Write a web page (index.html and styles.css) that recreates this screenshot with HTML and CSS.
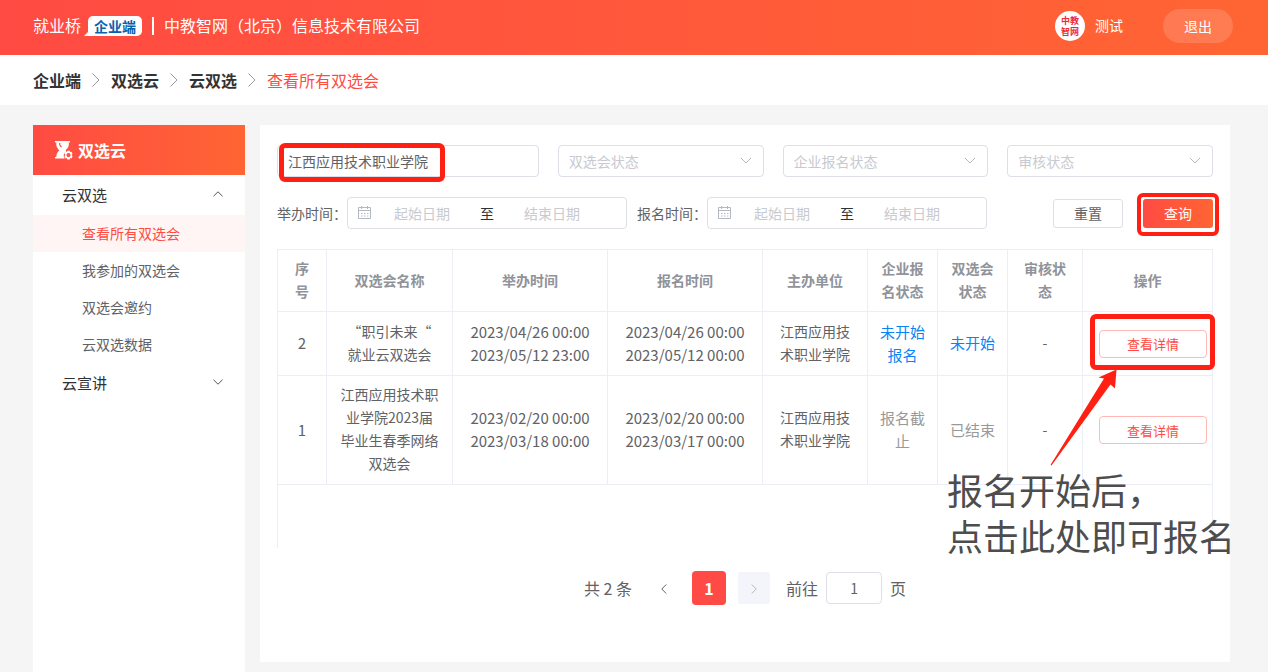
FILE: index.html
```html
<!DOCTYPE html>
<html lang="zh-CN">
<head>
    <meta charset="UTF-8">
    <meta name="viewport" content="width=device-width, initial-scale=1.0">
    <title>查看所有双选会 - 就业桥企业端</title>
    <link rel="stylesheet" href="styles.css">
</head>
<body>
    <header class="header">
        <span class="logo-text">就业桥</span>
        <span class="logo-badge">企业端</span>
        <span class="header-line"></span>
        <span class="company">中教智网（北京）信息技术有限公司</span>
        <div class="user">
            <span class="avatar">中教<br>智网</span>
            <span class="user-name">测试</span>
            <button type="button" class="logout-btn">退出</button>
        </div>
    </header>

    <nav class="breadcrumb">
        <a href="#">企业端</a>
        <svg width="8" height="16" viewBox="0 0 8 16"><path d="M0.5 1.5L7 8L0.5 14.5"/></svg>
        <a href="#">双选云</a>
        <svg width="8" height="16" viewBox="0 0 8 16"><path d="M0.5 1.5L7 8L0.5 14.5"/></svg>
        <a href="#">云双选</a>
        <svg width="8" height="16" viewBox="0 0 8 16"><path d="M0.5 1.5L7 8L0.5 14.5"/></svg>
        <span class="current">查看所有双选会</span>
    </nav>

    <div class="page">
        <aside class="sidebar">
            <div class="sidebar-title">
                <svg width="18" height="19" viewBox="0 0 18 19">
                    <path fill="#fff" fill-rule="evenodd" d="M0 0h15v1.500h-1.200v2.200c0 2.200-1.200 3.600-3 5.100 0 .8.2 1.200.6 1.600-1.700.8-2.700 2.300-2.700 4 0 1.200.4 2.300 1.100 3.100H0v-1.500h1.300c0-3 1.200-4.800 2.900-6.700C2.600 7.200 1.300 5.800 1.300 3.700V1.500H0zM4 2c0 2.200.8 3.400 2.400 4.600l.7-.8C5.600 4.700 5.200 3.600 5.200 2z"/>
                    <path fill="#fff" fill-rule="evenodd" d="M12.300 9.800h2.400l.4 1.300 1.300-.3 1.200 2-1 1.300 1 1.300-1.200 2-1.300-.3-.4 1.400h-2.400l-.4-1.400-1.300.3-1.200-2 1-1.300-1-1.300 1.200-2 1.300.3zM13.500 12a2.100 2.100 0 1 0 0 4.200 2.100 2.100 0 0 0 0-4.200z"/>
                </svg>
                <span>双选云</span>
            </div>
            <button type="button" class="menu-group">云双选
                <svg width="10" height="6" viewBox="0 0 10 6"><path d="M0.500 5.200L5 0.800L9.500 5.200"/></svg>
            </button>
            <a href="#" class="menu-item active">查看所有双选会</a>
            <a href="#" class="menu-item">我参加的双选会</a>
            <a href="#" class="menu-item">双选会邀约</a>
            <a href="#" class="menu-item">云双选数据</a>
            <button type="button" class="menu-group">云宣讲
                <svg width="10" height="6" viewBox="0 0 10 6"><path d="M0.500 0.800L5 5.200L9.500 0.800"/></svg>
            </button>
        </aside>

        <main class="main">
            <div class="filters">
                <div class="field">
                    <input type="text" class="text-input" value="江西应用技术职业学院" aria-label="学校名称">
                    <span class="mark mark-search"></span>
                </div>
                <div class="field">
                    <select class="select" aria-label="双选会状态"><option>双选会状态</option></select>
                    <svg class="arrow" width="12" height="7" viewBox="0 0 12 7"><path d="M1 1L6 6L11 1"/></svg>
                </div>
                <div class="field">
                    <select class="select" aria-label="企业报名状态"><option>企业报名状态</option></select>
                    <svg class="arrow" width="12" height="7" viewBox="0 0 12 7"><path d="M1 1L6 6L11 1"/></svg>
                </div>
                <div class="field">
                    <select class="select" aria-label="审核状态"><option>审核状态</option></select>
                    <svg class="arrow" width="12" height="7" viewBox="0 0 12 7"><path d="M1 1L6 6L11 1"/></svg>
                </div>
            </div>

            <div class="filters-dates">
                <div class="date-group">
                    <label for="hold-start">举办时间：</label>
                    <div class="date-range">
                        <svg width="14" height="14" viewBox="0 0 14 14"><path d="M0.500 1.500h12v11h-12zM0.500 4.500h12M3.500 0v3M9.500 0v3M3 7.500h1.500M6 7.500h1.500M9 7.500h1.500M3 10h1.500M6 10h1.500M9 10h1.500"/></svg>
                        <input type="text" id="hold-start" placeholder="起始日期">
                        <span>至</span>
                        <input type="text" placeholder="结束日期" aria-label="举办结束日期">
                    </div>
                </div>
                <div class="date-group">
                    <label for="sign-start">报名时间：</label>
                    <div class="date-range">
                        <svg width="14" height="14" viewBox="0 0 14 14"><path d="M0.500 1.500h12v11h-12zM0.500 4.500h12M3.500 0v3M9.500 0v3M3 7.500h1.500M6 7.500h1.500M9 7.500h1.500M3 10h1.500M6 10h1.500M9 10h1.500"/></svg>
                        <input type="text" id="sign-start" placeholder="起始日期">
                        <span>至</span>
                        <input type="text" placeholder="结束日期" aria-label="报名结束日期">
                    </div>
                </div>
                <div class="actions">
                    <button type="button" class="btn">重置</button>
                    <div class="field">
                        <button type="button" class="btn btn-primary">查询</button>
                        <span class="mark mark-query"></span>
                    </div>
                </div>
            </div>

            <div class="table-wrap">
                <table class="table">
                    <colgroup>
                        <col class="col-no"><col><col class="col-time"><col class="col-time"><col class="col-host">
                        <col class="col-status"><col class="col-status"><col class="col-audit"><col class="col-action">
                    </colgroup>
                    <thead>
                        <tr>
                            <th>序号</th>
                            <th>双选会名称</th>
                            <th>举办时间</th>
                            <th>报名时间</th>
                            <th>主办单位</th>
                            <th class="narrow">企业报名状态</th>
                            <th class="narrow">双选会状态</th>
                            <th class="narrow">审核状态</th>
                            <th>操作</th>
                        </tr>
                    </thead>
                    <tbody>
                        <tr>
                            <td class="num">2</td>
                            <td>“职引未来“<br>就业云双选会</td>
                            <td class="num">2023/04/26 00:00<br>2023/05/12 23:00</td>
                            <td class="num">2023/04/26 00:00<br>2023/05/12 00:00</td>
                            <td>江西应用技术职业学院</td>
                            <td class="narrow status pending">未开始报名</td>
                            <td class="narrow status pending">未开始</td>
                            <td class="narrow">-</td>
                            <td class="action">
                                <div class="field">
                                    <button type="button" class="detail-btn">查看详情</button>
                                    <span class="mark mark-detail"></span>
                                    <svg class="pointer" width="68" height="98" viewBox="0 0 68 98"><path d="M66.500 0.500L48.500 8.500L54 9.500L0.500 96L1.500 96.500L60.500 15.500L65 19.500Z"/></svg>
                                    <p class="note">报名开始后，<br>点击此处即可报名</p>
                                </div>
                            </td>
                        </tr>
                        <tr>
                            <td class="num">1</td>
                            <td>江西应用技术职业学院2023届毕业生春季网络双选会</td>
                            <td class="num">2023/02/20 00:00<br>2023/03/18 00:00</td>
                            <td class="num">2023/02/20 00:00<br>2023/03/17 00:00</td>
                            <td>江西应用技术职业学院</td>
                            <td class="narrow status closed">报名截止</td>
                            <td class="narrow status closed">已结束</td>
                            <td class="narrow">-</td>
                            <td class="action"><button type="button" class="detail-btn">查看详情</button></td>
                        </tr>
                    </tbody>
                </table>
            </div>

            <div class="pagination">
                <span>共 2 条</span>
                <div class="pages">
                    <button type="button" class="page-btn" aria-label="上一页"><svg width="6" height="10" viewBox="0 0 6 10"><path d="M5.200 0.500L0.800 5L5.200 9.500"/></svg></button>
                    <button type="button" class="page-btn current-page">1</button>
                    <button type="button" class="page-btn next" aria-label="下一页" disabled><svg width="6" height="10" viewBox="0 0 6 10"><path d="M0.800 0.500L5.200 5L0.800 9.500"/></svg></button>
                </div>
                <div class="jump">
                    <label for="page-no">前往</label>
                    <input type="text" id="page-no" value="1">
                    <span>页</span>
                </div>
            </div>
        </main>
    </div>
</body>
</html>
```
FILE: styles.css
```css
* {
    box-sizing: border-box;
}

body {
    display: flex;
    flex-direction: column;
    min-height: 100vh;
    margin: 0;
    background: #f5f5f5;
    color: #606266;
    font-family: "Noto Sans CJK SC", sans-serif;
    font-size: 14px;
    line-height: 23px;
}

a {
    color: inherit;
    text-decoration: none;
}

button, input, select {
    font-family: inherit;
    font-size: 14px;
    color: inherit;
}

button {
    padding: 0;
    border: none;
    background: none;
    cursor: pointer;
}

svg {
    flex: none;
    fill: none;
    stroke-width: 1;
}

/* header */
.header {
    display: flex;
    align-items: center;
    height: 55px;
    padding: 0 35px 4px 33px;
    background: linear-gradient(90deg, #ff4b43, #ff6533);
    color: #fff;
    font-size: 16px;
}

.logo-badge {
    position: relative;
    height: 20px;
    margin-left: 7px;
    padding: 0 6px;
    border-radius: 5px;
    background: #fff;
    color: #0a62ad;
    font-size: 14px;
    font-weight: bold;
    line-height: 20px;
}

.logo-badge::before {
    content: "";
    position: absolute;
    left: -4px;
    bottom: 0;
    border-left: 8px solid transparent;
    border-bottom: 8px solid #fff;
}

.header-line {
    width: 2px;
    height: 18px;
    margin: 0 10px;
    background: #fff;
}

.user {
    display: flex;
    align-items: center;
    margin-left: auto;
    font-size: 14px;
}

.avatar {
    width: 30px;
    height: 30px;
    padding-top: 4px;
    border-radius: 50%;
    background: #fff;
    color: #f02a35;
    font-size: 9px;
    font-weight: bold;
    line-height: 11px;
    text-align: center;
}

.user-name {
    margin: 0 40px 0 10px;
}

.logout-btn {
    width: 70px;
    height: 34px;
    border-radius: 17px;
    background: rgba(255, 255, 255, 0.15);
}

/* breadcrumb */
.breadcrumb {
    display: flex;
    align-items: center;
    gap: 11px;
    height: 50px;
    padding: 0 33px;
    background: #fff;
    color: #333;
    font-size: 16px;
    font-weight: bold;
}

.breadcrumb svg {
    stroke: #999;
}

.current {
    color: #ff4c43;
    font-weight: normal;
}

.page {
    flex: 1;
    display: flex;
    gap: 15px;
    padding: 20px 38px 0 33px;
}

/* sidebar */
.sidebar {
    flex: none;
    width: 212px;
    background: #fff;
}

.sidebar-title {
    display: flex;
    align-items: center;
    gap: 5px;
    height: 50px;
    padding: 0 22px;
    background: linear-gradient(90deg, #ff4b43, #ff6533);
    color: #fff;
    font-size: 16px;
    font-weight: bold;
}

.menu-group {
    display: flex;
    align-items: center;
    justify-content: space-between;
    width: 100%;
    height: 40px;
    padding: 0 22px 2px 29px;
    color: #303133;
    font-size: 15px;
}

.menu-group svg {
    stroke: #555;
}

.menu-item {
    display: block;
    height: 37px;
    padding-left: 49px;
    line-height: 37px;
}

.menu-item.active {
    background: #fff5f4;
    color: #ff4c43;
}

/* main card */
.main {
    flex: 1;
    min-width: 0;
    margin-bottom: 10px;
    padding: 20px 17px 0;
    background: #fff;
}

.filters {
    display: grid;
    grid-template-columns: 14fr 11fr 11fr 11fr;
    gap: 19px;
}

.field {
    position: relative;
}

.text-input, .select {
    display: block;
    width: 100%;
    height: 32px;
    padding: 0 10px;
    border: 1px solid #dcdfe6;
    border-radius: 4px;
    background: #fff;
}

.select {
    appearance: none;
    color: #c8cad0;
}

.arrow {
    position: absolute;
    top: 12px;
    right: 12px;
    stroke: #b4b8c0;
    pointer-events: none;
}

.filters-dates {
    display: flex;
    align-items: center;
    gap: 10px;
    margin: 20px 0;
}

.date-group {
    display: flex;
    align-items: center;
}

.date-range {
    display: flex;
    align-items: center;
    width: 280px;
    height: 32px;
    padding: 0 24px 0 10px;
    border: 1px solid #dcdfe6;
    border-radius: 4px;
}

.date-range svg {
    stroke: #b4b8c0;
}

.date-range input {
    flex: 1;
    min-width: 0;
    padding: 0;
    border: none;
    text-align: center;
}

.date-range input::placeholder {
    color: #c8cad0;
}

.date-range span {
    width: 30px;
    color: #303133;
    text-align: center;
}

.actions {
    display: flex;
    gap: 20px;
    margin-left: auto;
}

.btn {
    display: block;
    width: 70px;
    height: 29px;
    border: 1px solid #dcdfe6;
    border-radius: 3px;
}

.btn-primary {
    border: none;
    background: linear-gradient(90deg, #ff4b43, #ff6533);
    color: #fff;
}

/* table */
.table-wrap {
    padding-bottom: 63px;
    border: 1px solid #ebeef5;
    border-bottom: none;
}

.table {
    width: 100%;
    table-layout: fixed;
    border-spacing: 0;
    text-align: center;
}

.col-no { width: 49px; }
.col-time { width: 155px; }
.col-host { width: 105px; }
.col-status { width: 70px; }
.col-audit { width: 75px; }
.col-action { width: 129px; }

.table th, .table td {
    height: 64px;
    padding: 7px 13px 9px;
    border-right: 1px solid #ebeef5;
    border-bottom: 1px solid #ebeef5;
}

.table th {
    height: 62px;
    padding: 7px 13px 8px;
    color: #909399;
}

.table th:last-child, .table td:last-child {
    border-right: none;
}

.table .narrow {
    padding-left: 10px;
    padding-right: 10px;
}

.table .action {
    padding: 0 5px 0 16px;
}

.num, .status {
    font-size: 15px;
}

.pending {
    color: #0a84f5;
}

.closed {
    color: #999;
}

.detail-btn {
    display: block;
    width: 100%;
    height: 28px;
    border: 1px solid #ffb9b6;
    border-radius: 4px;
    color: #ff4c43;
    font-size: 13px;
}

/* guide marks over the controls */
.mark {
    position: absolute;
    border: 5px solid #ff2013;
    border-radius: 6px;
    pointer-events: none;
}

.mark-search {
    top: -2px;
    left: 2px;
    width: 166px;
    height: 39px;
}

.mark-query {
    top: -6px;
    right: -6px;
    bottom: -8px;
    left: -6px;
    border-width: 4px;
}

.mark-detail {
    top: -16px;
    right: -8px;
    bottom: -12px;
    left: -9px;
}

.pointer {
    position: absolute;
    top: 39px;
    left: -49px;
    fill: #ff2013;
}

.note {
    position: absolute;
    top: 136px;
    left: -152px;
    margin: 0;
    color: #4d4d4d;
    font-size: 36px;
    line-height: 46px;
    text-align: left;
    white-space: nowrap;
}

/* pagination */
.pagination {
    display: flex;
    align-items: center;
    justify-content: center;
    gap: 16px;
    margin: 23px 0 57px;
    font-size: 16px;
}

.pages, .jump {
    display: flex;
    align-items: center;
    gap: 12px;
}

.page-btn {
    width: 32px;
    height: 32px;
    border-radius: 3px;
}

.page-btn svg {
    stroke: #606266;
}

.current-page {
    width: 34px;
    height: 34px;
    border-radius: 4px;
    background: #ff4a45;
    color: #fff;
    font-size: 16px;
    font-weight: bold;
}

.next {
    background: #f4f5fa;
}

.next svg {
    stroke: #b4b8c0;
}

.jump {
    gap: 8px;
}

.jump input {
    width: 56px;
    height: 32px;
    border: 1px solid #dcdfe6;
    border-radius: 4px;
    text-align: center;
}
```
